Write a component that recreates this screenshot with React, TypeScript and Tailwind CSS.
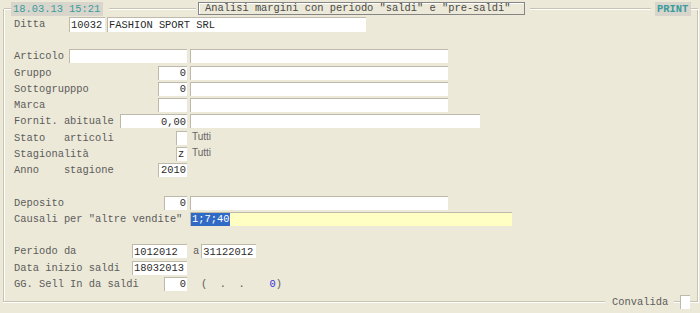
import React from 'react';

const mono = { fontFamily: '"Liberation Mono", "Courier New", monospace' };

const Line: React.FC<{ w: number; className?: string }> = ({ w, className }) => (
  <div className={`h-[2px] border-t border-[#c7c4b4] bg-white shrink-0 ${className ?? ''}`} style={{ width: w }} />
);

const Field: React.FC<{ w: number; right?: boolean; yellow?: boolean; children?: React.ReactNode; className?: string }> = ({ w, right, yellow, children, className }) => (
  <div
    className={`h-[14px] shrink-0 border-t border-l border-[#bdbaac] flex items-center px-[1px] leading-none text-[#2a2a2a] overflow-hidden whitespace-pre ${right ? 'justify-end' : ''} ${yellow ? 'bg-[#ffffc4]' : 'bg-white'} ${className ?? ''}`}
    style={{ width: w }}
  >
    {children}
  </div>
);

const Row: React.FC<{ label?: string; lw?: number; children?: React.ReactNode }> = ({ label, lw = 0, children }) => (
  <div className="h-[16.25px] flex items-start pl-[14px]">
    {label !== undefined && (
      <span className="shrink-0 whitespace-pre leading-[14px] text-[#5c5c5c]" style={{ width: lw }}>{label}</span>
    )}
    {children}
  </div>
);

const Tutti = () => (
  <span className="ml-[5px] leading-[12px] text-[10px] text-[#666] font-['Liberation_Sans',Arial,sans-serif]">Tutti</span>
);

export default function App() {
  return (
    <div className="relative w-[700px] h-[313px] bg-[#ece9d8] text-[10.4px] overflow-hidden" style={mono}>
      {/* etched group frame */}
      <div className="absolute left-[3px] top-[9px] w-[695px] h-[294px] border-l border-r border-[#c7c4b4] shadow-[inset_1px_0_0_#fff,1px_0_0_#fff]" />

      <div className="relative">
        {/* header */}
        <div className="h-[16px] pt-[1px] flex items-center">
          <Line w={7} className="ml-[4px]" />
          <div className="h-[14px] w-[92px] shrink-0 bg-[#d8d5cc] text-[#3a9c9c] leading-[14px] pl-[2px]">18.03.13 15:21</div>
          <Line w={87} className="ml-[6px]" />
          <div className="ml-[2px] h-[13px] w-[327px] shrink-0 border border-[#858585] shadow-[inset_1px_1px_0_#fff] text-[#4a4a4a] leading-[11px] pl-[6px] whitespace-pre">Analisi margini con periodo "saldi" e "pre-saldi"</div>
          <Line w={121} className="ml-[5px]" />
          <div className="ml-[4px] h-[14px] w-[36px] shrink-0 bg-[#d8d5cc] text-[#3a9c9c] font-bold leading-[14px] pl-[2px]">PRINT</div>
          <Line w={7} />
        </div>

        {/* form */}
        <div className="pt-[1px]">
          <div className="h-[32.25px] flex items-start pl-[14px]">
            <span className="w-[55px] shrink-0 leading-[15px] text-[#5c5c5c]">Ditta</span>
            <Field w={36} className="h-[15px]">10032</Field>
            <Field w={259} className="ml-[2px] h-[15px]">FASHION SPORT SRL</Field>
          </div>
          <Row label="Articolo" lw={55}>
            <Field w={118} />
            <Field w={258} className="ml-[3px]" />
          </Row>
          <Row label="Gruppo" lw={144}>
            <Field w={29} right>0</Field>
            <Field w={258} className="ml-[3px]" />
          </Row>
          <Row label="Sottogrupppo" lw={144}>
            <Field w={29} right>0</Field>
            <Field w={258} className="ml-[3px]" />
          </Row>
          <Row label="Marca" lw={144}>
            <Field w={29} />
            <Field w={258} className="ml-[3px]" />
          </Row>
          <Row label="Fornit. abituale" lw={106}>
            <Field w={67} right>0,00</Field>
            <Field w={290} className="ml-[3px]" />
          </Row>
          <Row label="Stato   articoli" lw={162}>
            <Field w={11} />
            <Tutti />
          </Row>
          <Row label="Stagionalità" lw={162}>
            <Field w={11}>z</Field>
            <Tutti />
          </Row>
          <Row label="Anno    stagione" lw={144}>
            <Field w={29} right>2010</Field>
          </Row>
          <Row />
          <Row label="Deposito" lw={150}>
            <Field w={23} right>0</Field>
            <Field w={258} className="ml-[3px]" />
          </Row>
          <Row label={'Causali per "altre vendite"'} lw={176}>
            <Field w={322} yellow className="!px-0">
              <span className="bg-[#316ac5] text-white leading-[13px] px-[1px]">1;7;40</span>
            </Field>
          </Row>
          <Row />
          <Row label="Periodo da" lw={118}>
            <Field w={55}>1012012</Field>
            <span className="ml-[6px] mr-[2px] leading-[14px] text-[#5c5c5c]">a</span>
            <Field w={55}>31122012</Field>
          </Row>
          <Row label="Data inizio saldi" lw={118}>
            <Field w={55}>18032013</Field>
          </Row>
          <Row label="GG. Sell In da saldi" lw={150}>
            <Field w={23} right>0</Field>
            <span className="ml-[14px] leading-[14px] whitespace-pre text-[#5c5c5c]">(  .  .    <span className="text-[#3030e0]">0</span>)</span>
          </Row>
        </div>

        {/* footer */}
        <div className="absolute left-0 top-[295px] w-[700px] h-[14px] flex items-center">
          <Line w={602} className="ml-[3px]" />
          <span className="ml-[7px] text-[#5c5c5c] leading-[14px]">Convalida</span>
          <Line w={6} className="ml-[6px]" />
          <div className="h-[14px] w-[10px] bg-white border-t border-l border-[#bdbaac] shrink-0" />
          <Line w={8} />
        </div>
      </div>
    </div>
  );
}
